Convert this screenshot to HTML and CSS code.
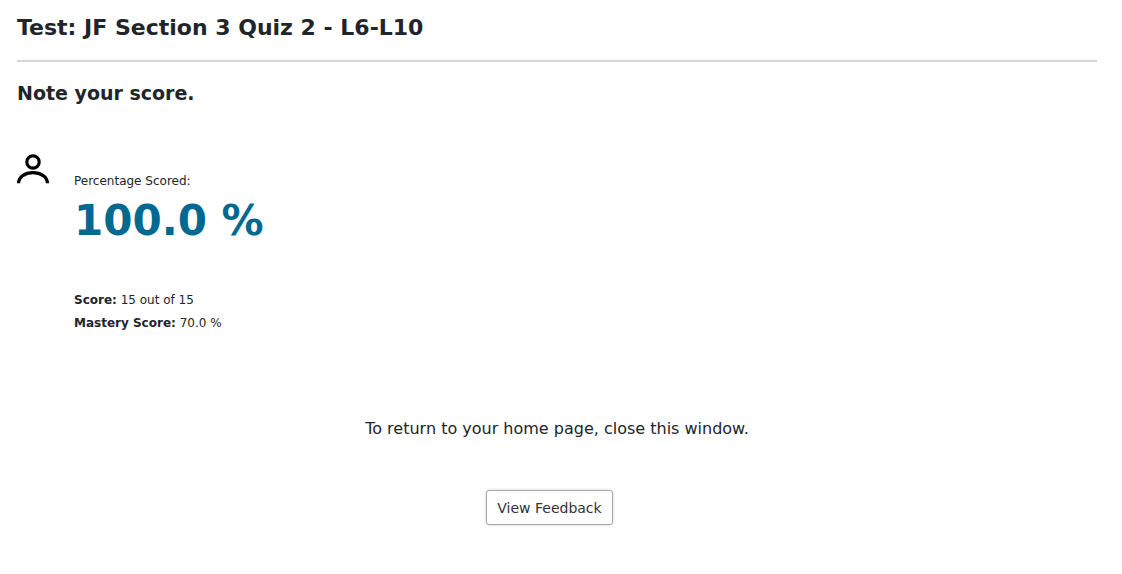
FILE: index.html
```html
<!DOCTYPE html>
<html lang="en">
<head>
<meta charset="utf-8">
<title>Test: JF Section 3 Quiz 2 - L6-L10</title>
<link rel="stylesheet" href="styles.css">
</head>
<body>
<main class="page">
  <h1 class="title">Test: JF Section 3 Quiz 2 - L6-L10</h1>
  <h2 class="subtitle">Note your score.</h2>
  <section class="result">
    <svg class="person" viewBox="0 0 32 32" aria-hidden="true">
      <circle cx="16" cy="9" r="6.2"/>
      <path d="M1.600 30.300C1.600 24 8 19.700 16 19.700S30.400 24 30.400 30.300"/>
    </svg>
    <div class="details">
      <p class="label">Percentage Scored:</p>
      <p class="percent">100.0 %</p>
      <p class="line"><strong>Score:</strong> 15 out of 15</p>
      <p class="line"><strong>Mastery Score:</strong> 70.0 %</p>
    </div>
  </section>
  <p class="notice">To return to your home page, close this window.</p>
  <div class="actions"><button class="button" type="button">View Feedback</button></div>
</main>
</body>
</html>
```
FILE: styles.css
```css
body {
  margin: 0;
  background: #fff;
  color: #212529;
  font-family: Verdana, "DejaVu Sans", sans-serif;
}

.page {
  padding: 12px 25px 48px 17px;
}

.title {
  margin: 0;
  padding-bottom: 16px;
  border-bottom: 2px solid #d5d5d5;
  font-size: 22px;
  line-height: 32px;
}

.subtitle {
  margin: 18px 0 0;
  font-size: 19px;
  line-height: 26px;
}

.result {
  display: flex;
  gap: 25px;
  margin-top: 47px;
}

.person {
  flex: none;
  width: 32px;
  height: 32px;
  fill: none;
  stroke: #000;
  stroke-width: 3.2;
}

.details {
  padding-top: 19px;
  font-size: 12px;
}

.label,
.percent,
.line {
  margin: 0;
}

.label {
  line-height: 18px;
}

.percent {
  margin: 3px 0 40px;
  color: #00698f;
  font-size: 42px;
  font-weight: bold;
  line-height: 56px;
}

.line {
  line-height: 23px;
}

.notice {
  margin: 82px 0 0;
  font-size: 16px;
  line-height: 24px;
  text-align: center;
}

.actions {
  display: flex;
  justify-content: center;
  margin-top: 49px;
  padding-right: 15px;
}

.button {
  height: 35px;
  padding: 0 10px;
  border: 1px solid #aaa;
  border-radius: 3px;
  background: #fff;
  box-shadow: 0 0 3px rgba(0, 0, 0, 0.2);
  color: #333;
  font: 14px/20px Verdana, "DejaVu Sans", sans-serif;
}
```
